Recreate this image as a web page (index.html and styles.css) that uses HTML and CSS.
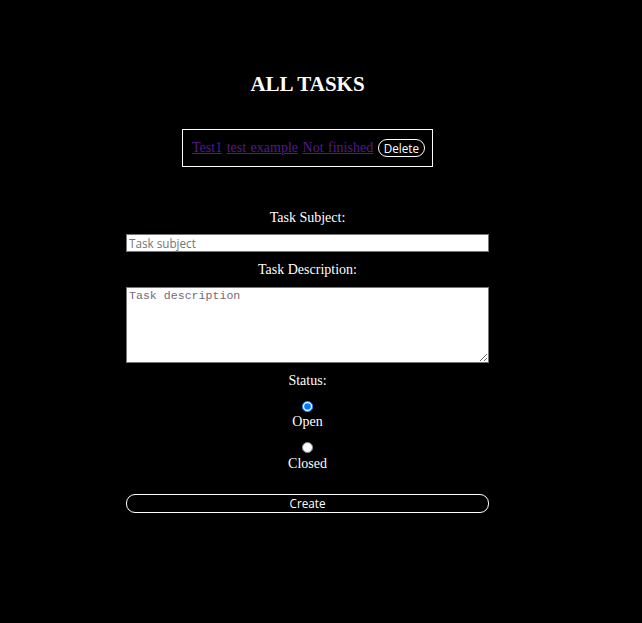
FILE: index.html
```html
<!DOCTYPE html>
<html lang="en">
<head>
<meta charset="utf-8">
<title>All Tasks</title>
<link rel="stylesheet" href="styles.css">
</head>
<body>
<div class="page">
  <h2 class="title">ALL TASKS</h2>
  <div class="task"><a href="#" class="task-link">Test1</a> <a href="#" class="task-link">test example</a> <a href="#" class="task-link">Not finished</a> <button class="btn-delete" type="button">Delete</button></div>
  <form class="task-form">
    <label class="field-label" for="subject">Task Subject:</label>
    <input class="text-input" id="subject" type="text" placeholder="Task subject">
    <label class="field-label gap" for="desc">Task Description:</label>
    <textarea class="text-area" id="desc" placeholder="Task description"></textarea>
    <label class="field-label gap">Status:</label>
    <div class="radio-item">
      <input class="radio" type="radio" name="status" id="open" checked>
      <label class="radio-label" for="open">Open</label>
    </div>
    <div class="radio-item">
      <input class="radio" type="radio" name="status" id="closed">
      <label class="radio-label" for="closed">Closed</label>
    </div>
    <button class="btn-create" type="button">Create</button>
  </form>
</div>
</body>
</html>
```

FILE: styles.css
```css
html, body {
  margin: 0;
  background: #000;
}
body {
  color: #fff;
  font-family: "Liberation Serif", "Times New Roman", serif;
  font-size: 14px;
  line-height: 16px;
}
.page {
  width: 615px;
  padding-top: 72px;
  display: flex;
  flex-direction: column;
  align-items: center;
}
.title {
  margin: 0;
  font-size: 21px;
  line-height: 24px;
  font-weight: bold;
}
.task {
  margin-top: 33px;
  border: 1px solid #fff;
  padding: 9px 7px 9px 9px;
  line-height: 18px;
  height: 18px;
  white-space: nowrap;
  word-spacing: 1px;
}
.task-link {
  color: #551a8b;
  text-decoration: underline;
}
.btn-delete {
  box-sizing: border-box;
  height: 18px;
  vertical-align: top;
  margin: 0;
  padding: 0 5px;
  background: #000;
  color: #fff;
  border: 1px solid #fff;
  border-radius: 9px;
  font-family: "Open Sans", "Liberation Sans", sans-serif;
  font-size: 11.7px;
  line-height: 14px;
  word-spacing: 0;
}
.task-form {
  margin-top: 43px;
  display: flex;
  flex-direction: column;
  align-items: center;
}
.field-label {
  display: block;
  line-height: 16px;
}
.field-label.gap {
  margin-top: 10px;
}
.text-input {
  box-sizing: border-box;
  margin-top: 8px;
  width: 363px;
  height: 18px;
  padding: 0 2px;
  border: 1px solid #767676;
  background: #fff;
  font-family: "Open Sans", "Liberation Sans", sans-serif;
  font-size: 11.7px;
}
.text-input::placeholder {
  color: #757575;
}
.text-area {
  box-sizing: border-box;
  margin-top: 9px;
  width: 363px;
  height: 76px;
  padding: 1px 2px;
  border: 1px solid #767676;
  background: #fff;
  font-family: "Liberation Mono", "DejaVu Sans Mono", monospace;
  font-size: 11.6px;
  line-height: 14px;
}
.text-area::placeholder {
  color: #7a6a78;
}
.radio-item {
  display: flex;
  flex-direction: column;
  align-items: center;
}
.radio {
  width: 11px;
  height: 11px;
  margin: 12px 0 2px;
}
.radio-item + .radio-item .radio-label {
  margin-top: 1px;
}
.radio-label {
  line-height: 16px;
}
.btn-create {
  box-sizing: border-box;
  margin-top: 22px;
  width: 363px;
  height: 19px;
  padding: 0;
  background: #000;
  color: #fff;
  border: 1px solid #fff;
  border-radius: 9px;
  font-family: "Open Sans", "Liberation Sans", sans-serif;
  font-size: 11.7px;
  line-height: 15px;
}
```
